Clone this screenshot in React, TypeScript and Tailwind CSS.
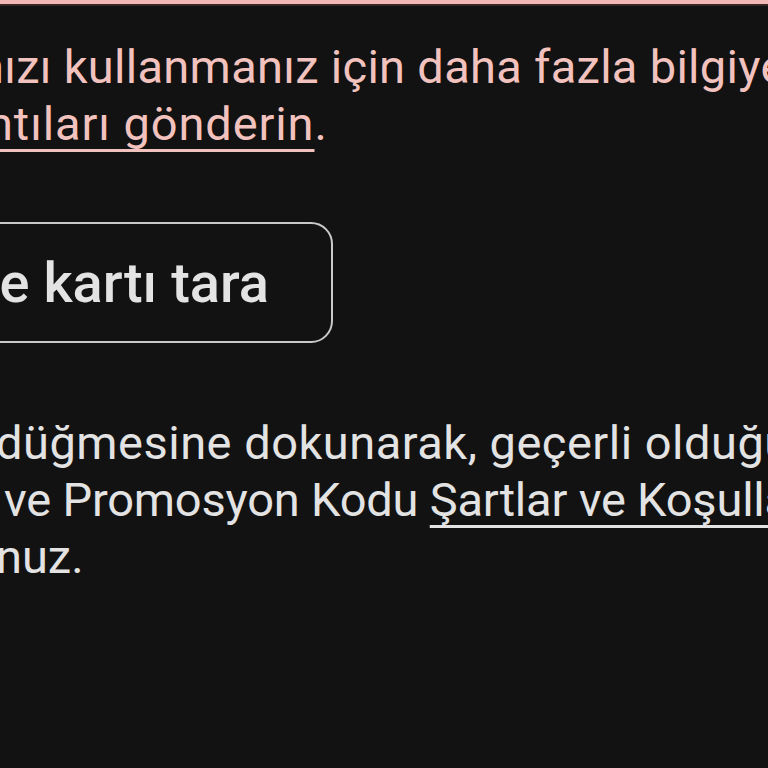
import React from "react";

export default function App() {
  const font = { fontFamily: "Roboto, 'Noto Sans', sans-serif" };
  return (
    <div className="w-[768px] h-[768px] bg-[#121212] overflow-hidden flex flex-col" style={font}>
      <div className="h-[4px] bg-[#f2b8b5] shrink-0" />
      <div className="h-[2px] bg-[#3a2525] shrink-0" />
      <div className="mt-[32px] text-[47px] leading-[57px] tracking-[0.3px] text-[#f2c2be] whitespace-nowrap">
        <div className="-ml-[22px]">nızı kullanmanız için daha fazla bilgiye ihtiyacımız var</div>
        <div className="-ml-[13px] tracking-[0.9px]">
          <span className="underline decoration-[2.5px] underline-offset-[9px] [text-decoration-skip-ink:none]">ntıları gönderin</span>.
        </div>
      </div>
      <div className="mt-[70px] -ml-[300px] w-[633px] h-[121px] shrink-0 rounded-[22px] border-[2.5px] border-[#c9c9c9] flex items-center justify-end pr-[62px] text-[56px] font-medium text-[#e3e3e3] whitespace-nowrap">
        Hediye kartı tara
      </div>
      <div className="mt-[71px] text-[47px] leading-[57px] text-[#e3e3e3] whitespace-nowrap">
        <div className="-ml-[4px] tracking-[0.5px]">düğmesine dokunarak, geçerli olduğu</div>
        <div className="ml-[4px] tracking-[-0.2px]">
          ve Promosyon Kodu{" "}
          <span className="underline decoration-[2.5px] underline-offset-[9px] [text-decoration-skip-ink:none]">Şartlar ve Koşulları</span>
        </div>
        <div className="-ml-[4px]">nuz.</div>
      </div>
    </div>
  );
}
